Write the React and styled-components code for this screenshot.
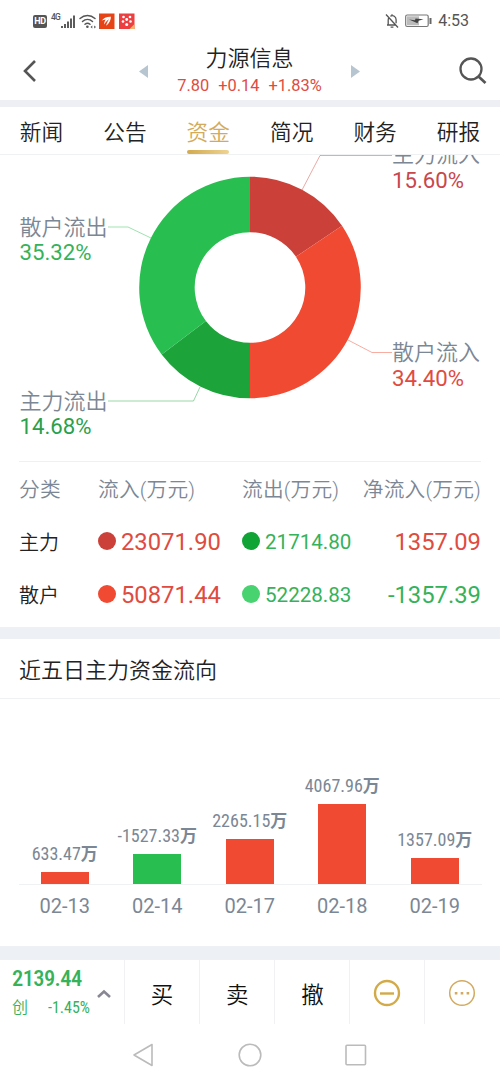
import React from 'react';
import styled, { createGlobalStyle } from 'styled-components';

const GlobalStyle = createGlobalStyle`
  *, *::before, *::after {
    box-sizing: border-box;
  }

  body {
    margin: 0;
    background: #fff;
    color: #222;
    font-family: Roboto, 'Noto Sans CJK SC', sans-serif;
    font-weight: 350;
  }
`;

const colors = {
  red: '#f04a32',
  darkRed: '#cb4139',
  green: '#29bf50',
  darkGreen: '#1ca33a',
  textRed: '#e04b41',
  textGreen: '#35b25a',
  grey: '#7b8794',
  gold: '#d3ab5b',
};

const Screen = styled.div`
  width: 500px;
  height: 1083px;
  overflow: hidden;
  display: flex;
  flex-direction: column;
`;

const StatusBar = styled.div`
  height: 42px;
  padding: 0 31px 0 33px;
  display: flex;
  align-items: center;
  justify-content: space-between;
`;

const StatusGroup = styled.div`
  display: flex;
  align-items: center;
  gap: ${({ $gap }) => $gap || 0}px;
`;

const HdBadge = styled.span`
  width: 14px;
  height: 13px;
  border-radius: 2px;
  background: #555;
  color: #fff;
  font-size: 9px;
  font-weight: 700;
  line-height: 13px;
  text-align: center;
  letter-spacing: -0.3px;
`;

const Network = styled.span`
  width: 10px;
  margin-left: 4px;
  align-self: flex-start;
  color: #555;
  font-size: 8.5px;
  font-weight: 500;
  letter-spacing: -0.8px;
  line-height: 10px;
`;

const Clock = styled.span`
  color: #555;
  font-size: 16px;
  font-weight: 400;
  line-height: 22px;
`;

const Header = styled.header`
  height: 58px;
  padding: 0 13px 0 22px;
  display: flex;
  align-items: center;
  justify-content: space-between;
`;

const StockSwitch = styled.div`
  width: 221px;
  margin-left: 3px;
  display: flex;
  align-items: center;
  justify-content: space-between;
`;

const Stock = styled.div`
  display: flex;
  flex-direction: column;
  align-items: center;
`;

const StockName = styled.h1`
  margin: 0;
  font-size: 22px;
  font-weight: 350;
  line-height: 30px;
`;

const Quote = styled.div`
  display: flex;
  gap: 9px;
  color: ${colors.textRed};
  font-size: 16.4px;
  font-weight: 400;
  line-height: 24px;
`;

const Divider = styled.div`
  flex: none;
  height: ${({ $size }) => $size}px;
  background: ${({ $color }) => $color || '#edf1f5'};
`;

const Tabs = styled.nav`
  height: 48px;
  padding: 0 20px;
  display: flex;
  justify-content: space-between;
  border-bottom: 1px solid #f0f1f3;
`;

const Tab = styled.a`
  width: 43px;
  display: flex;
  flex-direction: column;
  align-items: center;
  justify-content: space-between;
  padding-top: 12px;
  color: ${({ $active }) => ($active ? colors.gold : '#222')};
  font-size: 21.7px;
  line-height: 27px;
  white-space: nowrap;

  &::after {
    content: '';
    width: 42px;
    height: 4px;
    border-radius: 2px;
    background: ${({ $active }) =>
      $active ? 'linear-gradient(90deg, #d2aa50, #eed391)' : 'transparent'};
  }
`;

const Donut = styled.svg`
  display: block;
  flex: none;
  width: 500px;
  height: 306px;
`;

const SliceName = styled.text`
  fill: ${colors.grey};
  font-size: 22px;
`;

const SliceValue = styled.text`
  font-size: 22.2px;
  font-weight: 400;
`;

const FlowTable = styled.div`
  height: 166px;
  margin: 0 19px;
  border-top: 1px solid #eff0f2;
`;

const FlowRow = styled.div`
  height: 53px;
  display: grid;
  grid-template-columns: 79px 144px 110px 129px;
  align-items: center;
  color: ${({ $head }) => ($head ? colors.grey : '#222')};
  font-size: ${({ $head }) => ($head ? 20.7 : 20)}px;
  white-space: nowrap;
`;

const Amount = styled.span`
  display: flex;
  align-items: center;
  justify-content: ${({ $right }) => ($right ? 'flex-end' : 'flex-start')};
  gap: 5px;
  padding-top: 1px;
  color: ${({ $color }) => $color};
  font-size: ${({ $size }) => $size || 23.8}px;
  font-weight: 400;
`;

const Dot = styled.i`
  width: 18px;
  height: 18px;
  margin-bottom: 2px;
  border-radius: 50%;
  background: ${({ $color }) => $color};
`;

const HeadCell = styled.span`
  padding-bottom: 2px;
  letter-spacing: 0.2px;
  text-align: ${({ $right }) => ($right ? 'right' : 'left')};
`;

const SectionTitle = styled.h2`
  height: 60px;
  margin: 0;
  padding: 0 19px;
  border-bottom: 1px solid #f0f1f3;
  font-size: 22px;
  font-weight: 350;
  line-height: 64px;
`;

const BarChart = styled.section`
  height: 247px;
  padding: 0 18.5px;
`;

const Plot = styled.div`
  height: 186px;
  display: flex;
  align-items: flex-end;
  border-bottom: 1px solid #f0f1f3;
`;

const BarColumn = styled.div`
  width: 92.5px;
  display: flex;
  flex-direction: column;
  align-items: center;
`;

const BarLabel = styled.span`
  color: ${colors.grey};
  font-size: 18px;
  font-weight: 400;
  font-stretch: 75%;
  line-height: 20px;
  margin-bottom: 8px;
  white-space: nowrap;
`;

const Unit = styled.span`
  font-size: 17px;
  font-weight: 700;
`;

const Bar = styled.div`
  width: 48px;
  background: ${({ $down }) => ($down ? colors.green : colors.red)};
`;

const Dates = styled.div`
  display: flex;
  color: ${colors.grey};
  font-size: 20px;
  font-weight: 400;
  line-height: 42px;
`;

const DateLabel = styled.span`
  width: 92.5px;
  text-align: center;
`;

const BottomBar = styled.footer`
  height: 64px;
  display: grid;
  grid-template-columns: 123.5px repeat(5, 75.2px);
`;

const IndexCell = styled.div`
  padding: 4px 12.5px 0 12px;
  display: flex;
  justify-content: space-between;
  color: ${colors.textGreen};
`;

const IndexValue = styled.div`
  font-size: 22.5px;
  font-weight: 500;
  font-stretch: 75%;
  letter-spacing: -0.6px;
  line-height: 28px;
`;

const IndexChange = styled.div`
  width: 78px;
  display: flex;
  justify-content: space-between;
  font-size: 16px;
  line-height: 32px;
`;

const Percent = styled.span`
  font-weight: 400;
  font-stretch: 75%;
`;

const Action = styled.button`
  display: flex;
  align-items: center;
  justify-content: center;
  padding: 2px 0 0;
  border: 0;
  border-left: 1px solid #f1f1f3;
  background: none;
  color: #111;
  font: inherit;
  font-size: 22.5px;
`;

const ActionLabel = styled.span`
  padding-left: 1px;
`;

const SystemNav = styled.div`
  height: 59px;
  padding: 3px 132px 0;
  display: flex;
  align-items: center;
  justify-content: space-between;
`;

const slices = [
  { name: '主力流入', value: 15.6, color: colors.darkRed, text: '#c8474b', x: 392, y: 162, line: '302,190 320,155.5 392,155.5' },
  { name: '散户流入', value: 34.4, color: colors.red, text: colors.textRed, x: 392, y: 360, line: '348,340 372,352.5 392,352.5' },
  { name: '主力流出', value: 14.68, color: colors.darkGreen, text: '#2c9f4b', x: 19.5, y: 408.5, line: '200,387 193.5,401 108,401' },
  { name: '散户流出', value: 35.32, color: colors.green, text: colors.textGreen, x: 19.5, y: 234.5, line: '151,238 128,227 108,227' },
];

const rows = [
  { name: '主力', inflow: '23071.90', inDot: '#cb4139', outflow: '21714.80', outDot: '#10a336', net: '1357.09' },
  { name: '散户', inflow: '50871.44', inDot: '#f04a32', outflow: '52228.83', outDot: '#48d370', net: '-1357.39' },
];

const days = [
  { date: '02-13', value: '633.47', height: 12 },
  { date: '02-14', value: '-1527.33', height: 30 },
  { date: '02-17', value: '2265.15', height: 45 },
  { date: '02-18', value: '4067.96', height: 80 },
  { date: '02-19', value: '1357.09', height: 26 },
];

const CX = 250;
const CY = 287.5;

const pointAt = (percent, radius) => {
  const angle = (percent / 100) * Math.PI * 2;
  return `${CX + radius * Math.sin(angle)} ${CY - radius * Math.cos(angle)}`;
};

const slicePath = (from, to, outer = 110.8, inner = 55.3) =>
  `M${pointAt(from, outer)}A${outer} ${outer} 0 0 1 ${pointAt(to, outer)}` +
  `L${pointAt(to, inner)}A${inner} ${inner} 0 0 0 ${pointAt(from, inner)}Z`;

// The chart is scrolled under the tabs, so its first label is partly covered.
const FundDonut = () => {
  let start = 0;
  return (
    <Donut viewBox="0 155 500 306">
      {slices.map(({ name, value, color, text, x, y, line }) => {
        const from = start;
        start += value;
        return (
          <g key={name}>
            <path d={slicePath(from, start)} fill={color} />
            <polyline points={line} fill="none" stroke={color} strokeOpacity="0.45" strokeWidth="1" />
            <SliceName x={x} y={y}>{name}</SliceName>
            <SliceValue x={x} y={y + 25.5} fill={text}>{`${value.toFixed(2)}%`}</SliceValue>
          </g>
        );
      })}
    </Donut>
  );
};

const SignalIcons = () => (
  <svg width="78" height="18" viewBox="2 0 78 18" fill="none">
    <path d="M3 16v-2M6 16v-4M9 16V9.500M12 16V6.500M15 16V3.500" stroke="#555" strokeWidth="1.900" />
    <g stroke="#555" strokeWidth="1.500" strokeLinecap="round">
      <path d="M21 6.500c4.500-4 10.500-4 15 0M23.500 9.500c3-2.700 7-2.700 10 0M26 12.300c1.500-1.300 3.500-1.300 5 0" />
    </g>
    <circle cx="28.400" cy="14.800" r="1.300" fill="#555" />
    <path d="M31.500 15l1.800-1.500v3zM37 15l-1.800-1.500v3z" fill="#555" />
    <rect x="40" y="1.500" width="15.500" height="15.500" fill="#e64416" />
    <path d="M42.500 9c2-3 5-4.500 9.500-4.300-.2 3.500-1.800 7-5 9 .8-2.500 1.700-4.500 3-6.500-2 1.200-3.500 2.800-4.600 5.300-.4-1.800.2-3.500 1.300-5-1.500.1-2.800.5-4.200 1.500z" fill="#fff" />
    <rect x="60" y="1.500" width="15.500" height="15.500" fill="#ed3f40" />
    <g fill="#fff">
      <circle cx="64.500" cy="5" r="1.300" />
      <circle cx="71" cy="5" r="1.300" />
      <circle cx="67.700" cy="7.500" r="1.400" />
      <circle cx="64" cy="9.500" r="1.300" />
      <circle cx="71.500" cy="9.500" r="1.300" />
      <circle cx="67.700" cy="12.500" r="1.500" />
    </g>
    <path d="M75.500 12v5h-5z" fill="#f7b267" />
  </svg>
);

const BellOffIcon = () => (
  <svg width="14" height="16" viewBox="0 0 14 16" fill="none" stroke="#555" strokeWidth="1.300">
    <path d="M1 1.500l12 13M2 12h9M3.200 12V7c0-1 .3-1.900.8-2.600M5.300 3.300c3-1.600 5.800.3 5.800 3.400v3.600M5.600 14.200h2.800M7 2.700V1.200" />
  </svg>
);

const BatteryIcon = () => (
  <svg width="27" height="14" viewBox="0 0 27 14" fill="none">
    <rect x="0.700" y="1" width="22.500" height="11.500" rx="1.500" stroke="#777" strokeWidth="1.200" />
    <rect x="2" y="2.300" width="12" height="9" fill="#bbb" />
    <path d="M4 5.500l6 .8.500-1.800 8 .7-5 1.500-1 2.600z" fill="#444" />
    <path d="M25.500 4v6" stroke="#666" strokeWidth="2" />
  </svg>
);

const App = () => (
  <>
    <GlobalStyle />
    <Screen>
      <StatusBar>
        <StatusGroup>
          <HdBadge>HD</HdBadge>
          <Network>4G</Network>
          <SignalIcons />
        </StatusGroup>
        <StatusGroup $gap={6}>
          <BellOffIcon />
          <BatteryIcon />
          <Clock>4:53</Clock>
        </StatusGroup>
      </StatusBar>
      <Header>
        <svg width="15" height="22" viewBox="0 0 15 22" fill="none" stroke="#555" strokeWidth="2.600">
          <path d="M13 1L3 11l10 10" />
        </svg>
        <StockSwitch>
          <svg width="10" height="13" viewBox="0 0 10 13"><path d="M0 6.500L9 0v13z" fill="#b7c5d0" /></svg>
          <Stock>
            <StockName>力源信息</StockName>
            <Quote>
              <span>7.80</span>
              <span>+0.14</span>
              <span>+1.83%</span>
            </Quote>
          </Stock>
          <svg width="10" height="13" viewBox="0 0 10 13"><path d="M10 6.500L1 0v13z" fill="#b7c5d0" /></svg>
        </StockSwitch>
        <svg width="28" height="28" viewBox="0 0 28 28" fill="none" stroke="#555" strokeWidth="2.300">
          <circle cx="12" cy="12" r="10.500" />
          <path d="M19.500 19.500l7 6.500" strokeWidth="2.700" />
        </svg>
      </Header>
      <Divider $size={7} $color="#eeeff5" />
      <Tabs>
        <Tab>新闻</Tab>
        <Tab>公告</Tab>
        <Tab $active>资金</Tab>
        <Tab>简况</Tab>
        <Tab>财务</Tab>
        <Tab>研报</Tab>
      </Tabs>
      <FundDonut />
      <FlowTable>
        <FlowRow $head>
          <HeadCell>分类</HeadCell>
          <HeadCell>流入(万元)</HeadCell>
          <HeadCell>流出(万元)</HeadCell>
          <HeadCell $right>净流入(万元)</HeadCell>
        </FlowRow>
        {rows.map(({ name, inflow, inDot, outflow, outDot, net }) => (
          <FlowRow key={name}>
            <span>{name}</span>
            <Amount $color={colors.textRed}>
              <Dot $color={inDot} />
              {inflow}
            </Amount>
            <Amount $color={colors.textGreen} $size={20.6}>
              <Dot $color={outDot} />
              {outflow}
            </Amount>
            <Amount $right $color={net.startsWith('-') ? colors.textGreen : colors.textRed}>
              {net}
            </Amount>
          </FlowRow>
        ))}
      </FlowTable>
      <Divider $size={12} />
      <SectionTitle>近五日主力资金流向</SectionTitle>
      <BarChart>
        <Plot>
          {days.map(({ date, value, height }) => (
            <BarColumn key={date}>
              <BarLabel>
                {value}
                <Unit>万</Unit>
              </BarLabel>
              <Bar $down={value.startsWith('-')} style={{ height }} />
            </BarColumn>
          ))}
        </Plot>
        <Dates>
          {days.map(({ date }) => (
            <DateLabel key={date}>{date}</DateLabel>
          ))}
        </Dates>
      </BarChart>
      <Divider $size={14} />
      <BottomBar>
        <IndexCell>
          <div>
            <IndexValue>2139.44</IndexValue>
            <IndexChange>
              <span>创</span>
              <Percent>-1.45%</Percent>
            </IndexChange>
          </div>
          <svg width="14" height="60" viewBox="0 0 14 60" fill="none" stroke="#8a8795" strokeWidth="2.600">
            <path d="M1 33l6-5.500 6 5.500" />
          </svg>
        </IndexCell>
        <Action>
          <ActionLabel>买</ActionLabel>
        </Action>
        <Action>
          <ActionLabel>卖</ActionLabel>
        </Action>
        <Action>
          <ActionLabel>撤</ActionLabel>
        </Action>
        <Action>
          <svg width="28" height="28" viewBox="0 0 28 28" fill="none" stroke="#d3aa48" strokeWidth="2.400">
            <circle cx="14" cy="14" r="12" />
            <path d="M7 14.500h14" />
          </svg>
        </Action>
        <Action>
          <svg width="28" height="28" viewBox="0 0 28 28" fill="none" stroke="#d3aa60" strokeWidth="1.500">
            <circle cx="14" cy="14" r="12.300" />
            <path d="M6.800 14.200h2.600M12.700 14.200h2.600M18.600 14.200h2.600" strokeWidth="2.600" />
          </svg>
        </Action>
      </BottomBar>
      <SystemNav>
        <svg width="24" height="24" viewBox="0 0 24 24" fill="none" stroke="#bbb" strokeWidth="1.600">
          <path d="M2 12L20 1.500v21z" strokeLinejoin="round" />
        </svg>
        <svg width="24" height="24" viewBox="0 0 24 24" fill="none" stroke="#bbb" strokeWidth="1.600">
          <circle cx="12" cy="12" r="10.800" />
        </svg>
        <svg width="24" height="24" viewBox="0 0 24 24" fill="none" stroke="#bbb" strokeWidth="1.600">
          <rect x="2" y="2.300" width="19.500" height="19.500" rx="1" />
        </svg>
      </SystemNav>
    </Screen>
  </>
);

export default App;
